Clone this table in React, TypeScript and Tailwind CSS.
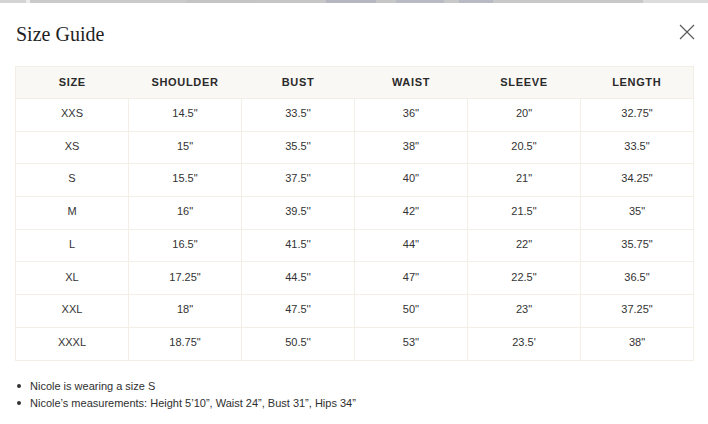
import React from "react";

const headers = ["SIZE", "SHOULDER", "BUST", "WAIST", "SLEEVE", "LENGTH"];
const rows: string[][] = [
  ["XXS", "14.5\"", "33.5''", "36''", "20\"", "32.75\""],
  ["XS", "15\"", "35.5''", "38''", "20.5\"", "33.5\""],
  ["S", "15.5\"", "37.5''", "40''", "21\"", "34.25\""],
  ["M", "16\"", "39.5''", "42''", "21.5\"", "35\""],
  ["L", "16.5\"", "41.5''", "44''", "22\"", "35.75\""],
  ["XL", "17.25\"", "44.5''", "47''", "22.5\"", "36.5\""],
  ["XXL", "18\"", "47.5''", "50''", "23\"", "37.25\""],
  ["XXXL", "18.75\"", "50.5''", "53''", "23.5'", "38\""],
];

export default function App() {
  return (
    <div className="w-[708px] h-[424px] bg-white overflow-hidden relative" style={{ fontFamily: '"Liberation Sans", Arial, sans-serif' }}>
      <div className="flex h-[3px] w-full">
        <div className="w-[26px] bg-[#d4d4d4]" />
        <div className="w-[4px] bg-[#ececec]" />
        <div className="w-[156px] bg-[#cacaca]" />
        <div className="w-[70px] bg-[#c4c4c4]" />
        <div className="w-[70px] bg-[#c6c6c6]" />
        <div className="w-[50px] bg-[#b4b7c0]" />
        <div className="w-[20px] bg-[#c6c6c6]" />
        <div className="w-[48px] bg-[#b8bbc3]" />
        <div className="w-[15px] bg-[#c8c8c8]" />
        <div className="w-[34px] bg-[#b8bbc3]" />
        <div className="w-[150px] bg-[#c8c8c8]" />
        <div className="flex-1 bg-[#dcdcdc]" />
      </div>

      <div className="flex items-start justify-between pl-[16px] pr-[13px] pt-[19px]">
        <h1 className="text-[20px] leading-[24px] text-[#1f1f1f]" style={{ fontFamily: '"Liberation Serif", "Times New Roman", serif' }}>
          Size Guide
        </h1>
        <button className="mt-[2px] w-[16px] h-[16px] text-[#555]" aria-label="Close">
          <svg width="16" height="16" viewBox="0 0 16 16" fill="none" stroke="currentColor" strokeWidth="1.1">
            <path d="M1 1L15 15M15 1L1 15" />
          </svg>
        </button>
      </div>

      <div className="pl-[15px] mt-[20px]">
        <table className="w-[679px] table-fixed border-collapse border border-[#f3efe6]">
          <thead>
            <tr className="h-[32px] bg-[#f9f8f4]">
              {headers.map((h) => (
                <th key={h} className="text-[11px] font-bold tracking-[0.06em] text-[#2a2a2a] text-center align-middle p-0">
                  {h}
                </th>
              ))}
            </tr>
          </thead>
          <tbody>
            {rows.map((r, i) => (
              <tr key={i} className="h-[32.7px]">
                {r.map((c, j) => (
                  <td key={j} className="border border-[#f3efe6] text-[11px] text-[#333] text-center align-middle p-0 pb-[3px]">
                    {c}
                  </td>
                ))}
              </tr>
            ))}
          </tbody>
        </table>
      </div>

      <ul className="mt-[17px] pl-[17px] text-[11px] leading-[17px] text-[#2f2f2f]">
        <li className="flex items-center">
          <span className="w-[4px] h-[4px] rounded-full bg-[#333] mr-[9px]" />
          Nicole is wearing a size S
        </li>
        <li className="flex items-center">
          <span className="w-[4px] h-[4px] rounded-full bg-[#333] mr-[9px]" />
          Nicole’s measurements: Height 5’10”, Waist 24”, Bust 31”, Hips 34”
        </li>
      </ul>
    </div>
  );
}
